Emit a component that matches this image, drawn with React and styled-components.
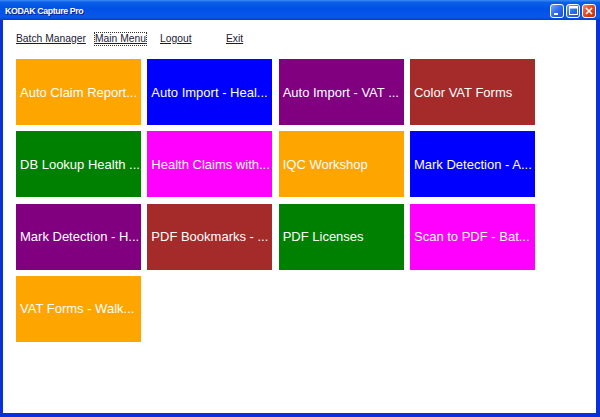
import React from "react";
import styled, { createGlobalStyle } from "styled-components";

const Global = createGlobalStyle`
  html, body { margin: 0; padding: 0; background: #fff; }
  body { font-family: "Liberation Sans", Arial, sans-serif; }
  #root { width: 600px; height: 417px; }
`;

const Frame = styled.div`
  width: 600px;
  height: 417px;
  display: flex;
  flex-direction: column;
  background: #0831d9;
  box-sizing: border-box;
`;

const TitleBar = styled.div`
  height: 20px;
  flex: none;
  display: flex;
  align-items: center;
  justify-content: space-between;
  padding: 0 4px 0 5px;
  background: linear-gradient(#3a8cf6 0%, #0a5fe6 12%, #0050e6 45%, #0a58ea 85%, #003fcf 100%);
`;

const Title = styled.span`
  color: #fff;
  font-family: "Liberation Sans", Arial, sans-serif;
  font-weight: bold;
  font-size: 8.8px;
  letter-spacing: -0.4px;
  padding-top: 2px;
  text-shadow: 1px 1px 0 #0a1e8a;
`;

const Controls = styled.div`
  display: flex;
  gap: 2px;
  margin-top: 1px;
`;

const CtlButton = styled.div`
  width: 14px;
  height: 14px;
  border: 1px solid #fff;
  border-radius: 3px;
  box-sizing: border-box;
  background: ${(p) =>
    p.$close
      ? "linear-gradient(135deg, #f08a6a 0%, #e04a22 45%, #c2310c 100%)"
      : "linear-gradient(135deg, #7aa6ff 0%, #2d6bf0 50%, #1a52d8 100%)"};
  display: flex;
  align-items: center;
  justify-content: center;
`;

const Client = styled.div`
  flex: 1;
  margin: 0 4px 4px 3px;
  background: #fff;
  display: flex;
  flex-direction: column;
`;

const Nav = styled.nav`
  display: grid;
  grid-template-columns: 79px 65px 66px auto;
  align-items: center;
  height: 14px;
  margin: 12px 0 0 12px;
`;

const NavLink = styled.a`
  justify-self: start;
  color: #1a1a3a;
  font-size: 10.3px;
  text-decoration: underline;
  line-height: 12px;
  padding: 0;
  cursor: pointer;
  border: 1px dotted ${(p) => (p.$focused ? "#333" : "transparent")};
`;

const Grid = styled.div`
  display: grid;
  grid-template-columns: repeat(4, 125px);
  grid-auto-rows: 66px;
  column-gap: 6.33px;
  row-gap: 6.33px;
  margin: 13px 0 0 13px;
`;

const Tile = styled.div`
  background: ${(p) => p.$color};
  color: #fff;
  font-size: 13px;
  display: flex;
  align-items: center;
  padding: 0 0 0 4px;
  min-width: 0;
  overflow: hidden;
`;

const TileText = styled.span`
  white-space: nowrap;
`;

const C = {
  orange: "#ffa500",
  blue: "#0000ff",
  purple: "#800080",
  brown: "#a52a2a",
  green: "#008000",
  magenta: "#ff00ff",
};

const tiles = [
  ["Auto Claim Report...", C.orange],
  ["Auto Import - Heal...", C.blue],
  ["Auto Import - VAT ...", C.purple],
  ["Color VAT Forms", C.brown],
  ["DB Lookup Health ...", C.green],
  ["Health Claims with...", C.magenta],
  ["IQC Workshop", C.orange],
  ["Mark Detection - A...", C.blue],
  ["Mark Detection - H...", C.purple],
  ["PDF Bookmarks - ...", C.brown],
  ["PDF Licenses", C.green],
  ["Scan to PDF - Bat...", C.magenta],
  ["VAT Forms - Walk...", C.orange],
];

export default function App() {
  return (
    <>
      <Global />
      <Frame>
        <TitleBar>
          <Title>KODAK Capture Pro</Title>
          <Controls>
            <CtlButton>
              <svg width="8" height="8" viewBox="0 0 8 8">
                <rect x="1" y="6" width="4" height="2" fill="#fff" />
              </svg>
            </CtlButton>
            <CtlButton>
              <svg width="9" height="9" viewBox="0 0 9 9">
                <rect x="0.5" y="0.5" width="8" height="8" fill="none" stroke="#fff" />
                <rect x="0.5" y="0.5" width="8" height="2" fill="#fff" />
              </svg>
            </CtlButton>
            <CtlButton $close>
              <svg width="8" height="8" viewBox="0 0 8 8">
                <path d="M1 1 L7 7 M7 1 L1 7" stroke="#fff" strokeWidth="1.6" />
              </svg>
            </CtlButton>
          </Controls>
        </TitleBar>
        <Client>
          <Nav>
            <NavLink>Batch Manager</NavLink>
            <NavLink $focused>Main Menu</NavLink>
            <NavLink>Logout</NavLink>
            <NavLink>Exit</NavLink>
          </Nav>
          <Grid>
            {tiles.map(([label, color]) => (
              <Tile key={label} $color={color}>
                <TileText>{label}</TileText>
              </Tile>
            ))}
          </Grid>
        </Client>
      </Frame>
    </>
  );
}
